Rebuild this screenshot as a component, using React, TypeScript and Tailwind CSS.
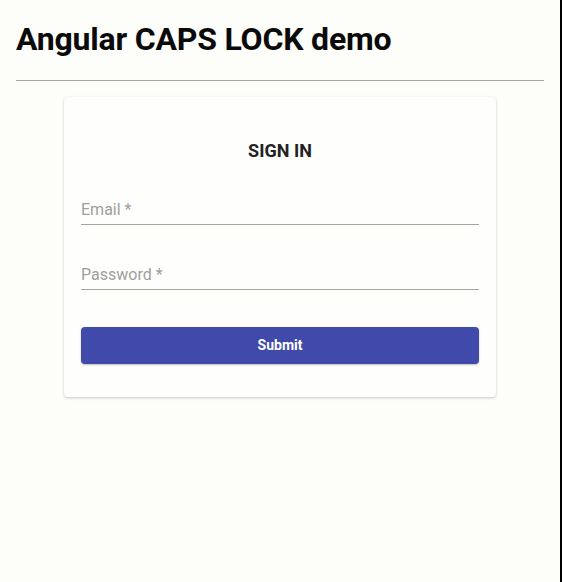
export default function App() {
  return (
    <div className="min-h-screen w-full bg-[#fdfdf9] border-r-2 border-black px-4 font-['Roboto',sans-serif] text-[#0a0a0a]">
      <h1 className="pt-[21px] pb-[21px] text-[32px] leading-[37.5px] font-bold tracking-[-0.2px]">
        Angular CAPS LOCK demo
      </h1>
      <hr className="border-0 border-t border-[#a6a69a]" />
      <div className="mx-auto mt-[16px] w-[432px] rounded bg-[#fefefd] px-[17px] pt-[42px] pb-[33px] shadow-[0_1px_3px_rgba(0,0,0,0.22)]">
        <div className="text-center text-[18px] leading-6 font-bold text-[#222]">SIGN IN</div>
        <div className="mt-[35px] flex flex-col gap-[38px]">
          <Field label="Email *" />
          <Field label="Password *" />
        </div>
        <button
          type="button"
          className="mt-[37px] h-[37px] w-full rounded bg-[#3f4aab] text-[14px] font-bold text-white shadow-[0_1px_2px_rgba(0,0,0,0.25)]"
        >
          Submit
        </button>
      </div>
    </div>
  );
}

function Field({ label }: { label: string }) {
  return (
    <div className="border-b border-[#a6a69a] pb-[2px]">
      <div className="text-[16px] leading-6 text-[#9e9e9e]">{label}</div>
    </div>
  );
}
